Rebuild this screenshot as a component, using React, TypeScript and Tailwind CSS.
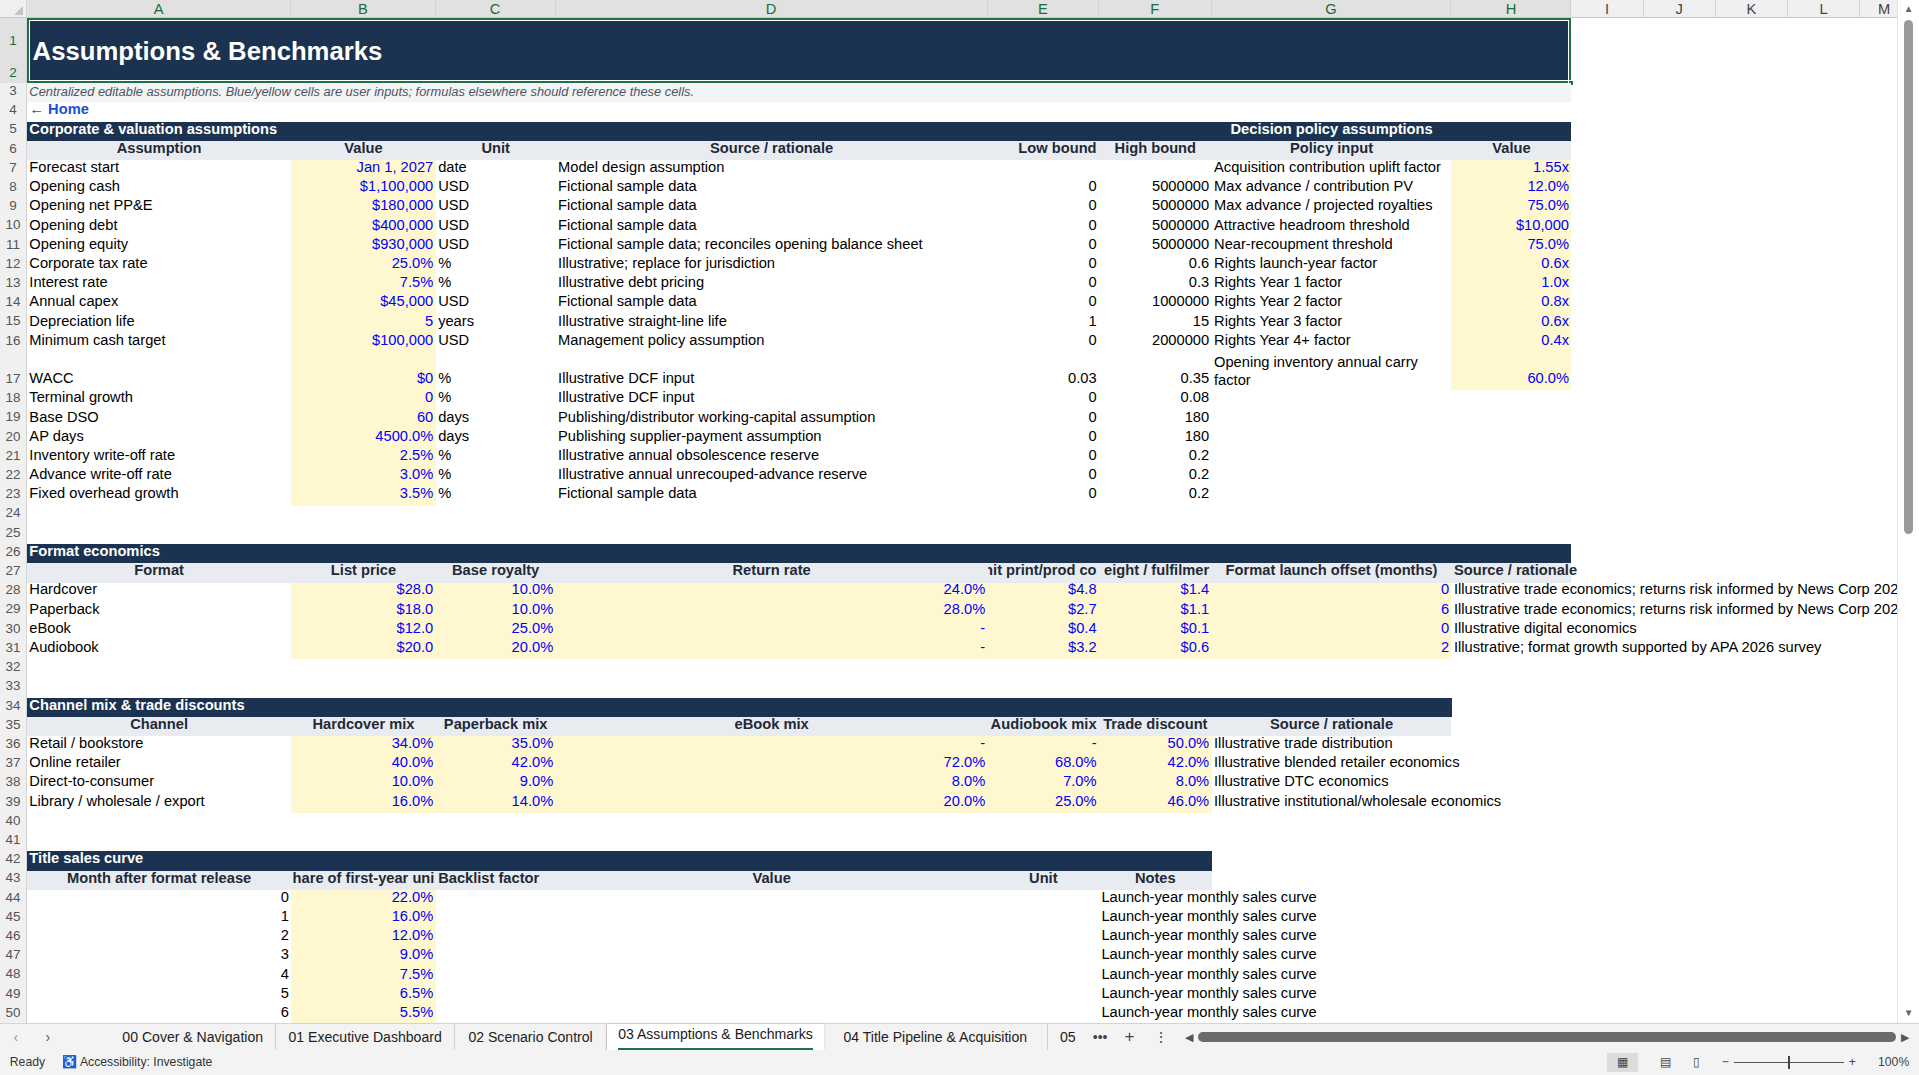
import React from "react";

const COLS = ["A","B","C","D","E","F","G","H","I","J","K","L","M"];
const W: Record<string, number> = { A: 216, B: 118, C: 98, D: 353, E: 91, F: 92, G: 196, H: 98, I: 59, J: 59, K: 59, L: 59, M: 40 };
const RH = 15.7;

type Cell = { c: string; span?: number; t?: string; al?: "l" | "r" | "c"; k?: "navy" | "hdr" | "y" | "yb" | "sub" | "link" | "plain"; clip?: boolean; wrap?: boolean };
type Row = { n: number; h?: number; cells: Cell[] };

const kCls: Record<string, string> = {
  navy: "bg-[#1b3350] text-white font-bold",
  hdr: "bg-[#e8ecf0] text-[#1f2937] font-bold",
  y: "bg-[#fff7cf] text-[#0000ff]",
  yb: "bg-[#fff7cf]",
  sub: "bg-[#f3f4f6] text-[#4b5563] italic text-[10.5px]",
  link: "text-[#1d4ed8] font-bold",
  plain: "text-black",
};

function span(c: string, n: number) {
  const i = COLS.indexOf(c);
  return COLS.slice(i, i + n).reduce((s, x) => s + W[x], 0);
}

const r = (n: number, cells: Cell[], h?: number): Row => ({ n, cells, h });
const T = (c: string, t: string, al: "l" | "r" | "c" = "l", k: Cell["k"] = "plain"): Cell => ({ c, t, al, k });
const Y = (c: string, t: string): Cell => ({ c, t, al: "r", k: "y" });
const H = (c: string, t: string, al: "l" | "r" | "c" = "c"): Cell => ({ c, t, al, k: "hdr" });

const corp: [string, string, string, string, string, string, string, string][] = [
  ["Forecast start", "Jan 1, 2027", "date", "Model design assumption", "", "", "Acquisition contribution uplift factor", "1.55x"],
  ["Opening cash", "$1,100,000", "USD", "Fictional sample data", "0", "5000000", "Max advance / contribution PV", "12.0%"],
  ["Opening net PP&E", "$180,000", "USD", "Fictional sample data", "0", "5000000", "Max advance / projected royalties", "75.0%"],
  ["Opening debt", "$400,000", "USD", "Fictional sample data", "0", "5000000", "Attractive headroom threshold", "$10,000"],
  ["Opening equity", "$930,000", "USD", "Fictional sample data; reconciles opening balance sheet", "0", "5000000", "Near-recoupment threshold", "75.0%"],
  ["Corporate tax rate", "25.0%", "%", "Illustrative; replace for jurisdiction", "0", "0.6", "Rights launch-year factor", "0.6x"],
  ["Interest rate", "7.5%", "%", "Illustrative debt pricing", "0", "0.3", "Rights Year 1 factor", "1.0x"],
  ["Annual capex", "$45,000", "USD", "Fictional sample data", "0", "1000000", "Rights Year 2 factor", "0.8x"],
  ["Depreciation life", "5", "years", "Illustrative straight-line life", "1", "15", "Rights Year 3 factor", "0.6x"],
  ["Minimum cash target", "$100,000", "USD", "Management policy assumption", "0", "2000000", "Rights Year 4+ factor", "0.4x"],
];
const corp2: [string, string, string, string, string, string][] = [
  ["Terminal growth", "0", "%", "Illustrative DCF input", "0", "0.08"],
  ["Base DSO", "60", "days", "Publishing/distributor working-capital assumption", "0", "180"],
  ["AP days", "4500.0%", "days", "Publishing supplier-payment assumption", "0", "180"],
  ["Inventory write-off rate", "2.5%", "%", "Illustrative annual obsolescence reserve", "0", "0.2"],
  ["Advance write-off rate", "3.0%", "%", "Illustrative annual unrecouped-advance reserve", "0", "0.2"],
  ["Fixed overhead growth", "3.5%", "%", "Fictional sample data", "0", "0.2"],
];

const rows: Row[] = [];
rows.push(r(3, [{ c: "A", span: 8, t: "Centralized editable assumptions. Blue/yellow cells are user inputs; formulas elsewhere should reference these cells.", al: "l", k: "sub" }]));
rows.push(r(4, [T("A", "← Home", "l", "link")]));
rows.push(r(5, [{ c: "A", span: 6, t: "Corporate & valuation assumptions", al: "l", k: "navy" }, { c: "G", span: 1, t: "Decision policy assumptions", al: "c", k: "navy" }, { c: "H", t: "", k: "navy" }]));
rows.push(r(6, [H("A", "Assumption"), H("B", "Value"), H("C", "Unit"), H("D", "Source / rationale"), H("E", "Low bound", "r"), H("F", "High bound"), H("G", "Policy input"), H("H", "Value")]));
corp.forEach((d, i) => rows.push(r(7 + i, [T("A", d[0]), Y("B", d[1]), T("C", d[2]), T("D", d[3]), T("E", d[4], "r"), T("F", d[5], "r"), T("G", d[6]), Y("H", d[7])])));
rows.push(r(17, [T("A", "WACC"), Y("B", "$0"), T("C", "%"), T("D", "Illustrative DCF input"), T("E", "0.03", "r"), T("F", "0.35", "r"), { c: "G", t: "Opening inventory annual carry factor", al: "l", k: "plain", wrap: true }, Y("H", "60.0%")], RH * 2));
corp2.forEach((d, i) => rows.push(r(18 + i, [T("A", d[0]), Y("B", d[1]), T("C", d[2]), T("D", d[3]), T("E", d[4], "r"), T("F", d[5], "r")])));
rows.push(r(24, []));
rows.push(r(25, []));
rows.push(r(26, [{ c: "A", span: 8, t: "Format economics", al: "l", k: "navy" }]));
rows.push(r(27, [H("A", "Format"), H("B", "List price"), H("C", "Base royalty"), H("D", "Return rate"), { ...H("E", "nit print/prod co", "r"), clip: true }, { ...H("F", "eight / fulfilmer", "r"), clip: true }, H("G", "Format launch offset (months)"), H("H", "Source / rationale", "l")]));
const fmt = [
  ["Hardcover", "$28.0", "10.0%", "24.0%", "$4.8", "$1.4", "0", "Illustrative trade economics; returns risk informed by News Corp 2025"],
  ["Paperback", "$18.0", "10.0%", "28.0%", "$2.7", "$1.1", "6", "Illustrative trade economics; returns risk informed by News Corp 2025"],
  ["eBook", "$12.0", "25.0%", "-", "$0.4", "$0.1", "0", "Illustrative digital economics"],
  ["Audiobook", "$20.0", "20.0%", "-", "$3.2", "$0.6", "2", "Illustrative; format growth supported by APA 2026 survey"],
];
fmt.forEach((d, i) => rows.push(r(28 + i, [T("A", d[0]), Y("B", d[1]), Y("C", d[2]), Y("D", d[3]), Y("E", d[4]), Y("F", d[5]), Y("G", d[6]), T("H", d[7])])));
rows.push(r(32, []));
rows.push(r(33, []));
rows.push(r(34, [{ c: "A", span: 7, t: "Channel mix & trade discounts", al: "l", k: "navy" }]));
rows.push(r(35, [H("A", "Channel"), H("B", "Hardcover mix"), H("C", "Paperback mix"), H("D", "eBook mix"), H("E", "Audiobook mix", "r"), H("F", "Trade discount"), H("G", "Source / rationale")]));
const ch = [
  ["Retail / bookstore", "34.0%", "35.0%", "-", "-", "50.0%", "Illustrative trade distribution"],
  ["Online retailer", "40.0%", "42.0%", "72.0%", "68.0%", "42.0%", "Illustrative blended retailer economics"],
  ["Direct-to-consumer", "10.0%", "9.0%", "8.0%", "7.0%", "8.0%", "Illustrative DTC economics"],
  ["Library / wholesale / export", "16.0%", "14.0%", "20.0%", "25.0%", "46.0%", "Illustrative institutional/wholesale economics"],
];
ch.forEach((d, i) => rows.push(r(36 + i, [T("A", d[0]), Y("B", d[1]), Y("C", d[2]), Y("D", d[3]), Y("E", d[4]), Y("F", d[5]), T("G", d[6])])));
rows.push(r(40, []));
rows.push(r(41, []));
rows.push(r(42, [{ c: "A", span: 6, t: "Title sales curve", al: "l", k: "navy" }]));
rows.push(r(43, [H("A", "Month after format release"), { ...H("B", "hare of first-year uni"), clip: true }, H("C", "Backlist factor", "l"), H("D", "Value"), H("E", "Unit"), H("F", "Notes")]));
["22.0%", "16.0%", "12.0%", "9.0%", "7.5%", "6.5%", "5.5%"].forEach((v, i) =>
  rows.push(r(44 + i, [T("A", String(i), "r"), Y("B", v), T("F", "Launch-year monthly sales curve")]))
);

function RowView({ row }: { row: Row }) {
  const h = row.h ?? RH;
  const out: React.ReactNode[] = [];
  let i = 0;
  while (i < COLS.length) {
    const col = COLS[i];
    const cell = row.cells.find((x) => x.c === col);
    if (cell) {
      const s = cell.span ?? 1;
      const w = span(col, s);
      const al = cell.al === "r" ? "justify-end text-right" : cell.al === "c" ? "justify-center text-center" : "justify-start text-left";
      out.push(
        <div key={col} style={{ width: w, height: h }} className={`shrink-0 flex items-end px-[2px] pb-[1px] ${al} ${kCls[cell.k ?? "plain"]} ${cell.clip ? "overflow-hidden" : "overflow-visible"} relative`}>
          <span className={`${cell.wrap ? "whitespace-normal leading-[15px]" : "whitespace-nowrap"} ${cell.clip ? "shrink-0" : ""}`}>{cell.t}</span>
        </div>
      );
      i += s;
    } else {
      out.push(<div key={col} style={{ width: W[col], height: h }} className="shrink-0" />);
      i++;
    }
  }
  return (
    <div className="flex">
      <div style={{ height: h }} className="w-[22px] shrink-0 bg-[#f0f0f0] text-[#555] text-[11px] flex items-end justify-center pb-[1px] border-r border-[#d4d4d4]">{row.n}</div>
      {out}
    </div>
  );
}

export default function App() {
  return (
    <div className="w-[1919px] h-[1075px] overflow-hidden bg-white">
      <div className="[zoom:1.2239] w-[1568px] h-[878px] flex flex-col text-[12px] text-black" style={{ fontFamily: '"Liberation Sans", Arial, sans-serif' }}>
        <div className="flex flex-1 min-h-0">
          <div className="flex-1 min-w-0 overflow-hidden">
            <div className="flex h-[15px] bg-[#f0f0f0] border-b border-[#c8c8c8] text-[12px]">
              <div className="w-[22px] shrink-0 relative border-r border-[#d4d4d4]">
                <div className="absolute right-[2px] bottom-[2px] w-0 h-0 border-l-[8px] border-l-transparent border-b-[8px] border-b-[#c4c4c4]" />
              </div>
              {COLS.map((c, i) => (
                <div key={c} style={{ width: W[c] }} className={`shrink-0 flex items-center justify-center border-r border-[#d4d4d4] ${i < 8 ? "text-[#1e6b3a] bg-[#e1e1e1]" : "text-[#444]"}`}>{c}</div>
              ))}
            </div>
            <div className="flex">
              <div className="w-[22px] shrink-0 bg-[#e1e1e1] text-[#1e6b3a] text-[11px] flex flex-col border-r border-[#d4d4d4]">
                <div className="h-[26.5px] flex items-end justify-center">1</div>
                <div className="h-[26.5px] flex items-end justify-center">2</div>
              </div>
              <div style={{ width: span("A", 8) }} className="h-[53px] shrink-0 bg-[#1b3350] border-2 border-[#1e7145] outline outline-1 outline-white -outline-offset-[3px] flex items-center pl-[3px] relative">
                <span className="text-white font-bold text-[21px]">Assumptions &amp; Benchmarks</span>
                <div className="absolute -right-[4px] -bottom-[4px] w-[5px] h-[5px] bg-[#1e7145] border border-white" />
              </div>
            </div>
            {rows.map((row) => <RowView key={row.n} row={row} />)}
          </div>
          <div className="w-[18px] shrink-0 bg-white flex flex-col items-center pt-[2px] border-l border-[#e5e5e5]">
            <div className="text-[8px] text-[#666]">▲</div>
            <div className="w-[8px] h-[420px] rounded bg-[#9a9a9a] mt-[2px]" />
            <div className="flex-1" />
            <div className="text-[8px] text-[#666] pb-[2px]">▼</div>
          </div>
        </div>
        <div className="h-[22px] bg-[#f3f3f3] flex items-center text-[11.5px] text-[#222] border-t border-[#d4d4d4]">
          <span className="w-[26px] text-center text-[#999]">‹</span>
          <span className="w-[26px] text-center text-[#555]">›</span>
          <div className="flex items-stretch h-full ml-[48px]">
            <div className="flex items-center border-r border-[#d0d0d0] pr-[10px]">00 Cover &amp; Navigation</div>
            <div className="px-[10px] flex items-center border-r border-[#d0d0d0]">01 Executive Dashboard</div>
            <div className="px-[11px] flex items-center border-r border-[#d0d0d0]">02 Scenario Control</div>
            <div className="px-[9px] bg-white flex flex-col justify-center shadow-sm">
              <span className="text-[#1a1a1a]">03 Assumptions &amp; Benchmarks</span>
              <div className="h-[3px] bg-[#1e7145] mt-[2px]" />
            </div>
            <div className="px-[16px] flex items-center border-r border-[#d0d0d0]">04 Title Pipeline &amp; Acquisition</div>
            <div className="px-[10px] flex items-center">05</div>
          </div>
          <span className="px-[4px] text-[#444]">•••</span>
          <span className="px-[10px] text-[14px] text-[#444]">+</span>
          <span className="px-[6px] text-[#444]">⋮</span>
          <div className="flex items-center ml-[8px] flex-1 pr-[8px]">
            <span className="text-[9px] text-[#555]">◀</span>
            <div className="flex-1 h-[8px] rounded bg-[#6b6b6b] mx-[4px]" />
            <span className="text-[9px] text-[#555]">▶</span>
          </div>
        </div>
        <div className="h-[20px] bg-[#f3f3f3] flex items-center text-[10px] text-[#333] px-[8px] gap-[14px]">
          <span>Ready</span>
          <span>♿ Accessibility: Investigate</span>
          <div className="flex-1" />
          <div className="flex items-center gap-[18px] text-[#444]">
            <span className="bg-[#dcdcdc] px-[8px]">▦</span>
            <span>▤</span>
            <span>▯</span>
            <span className="flex items-center gap-[4px]">−<span className="relative w-[90px] h-[1px] bg-[#555]"><span className="absolute left-[44px] -top-[5px] w-[2px] h-[11px] bg-[#444]" /></span>+</span>
            <span>100%</span>
          </div>
        </div>
      </div>
    </div>
  );
}
